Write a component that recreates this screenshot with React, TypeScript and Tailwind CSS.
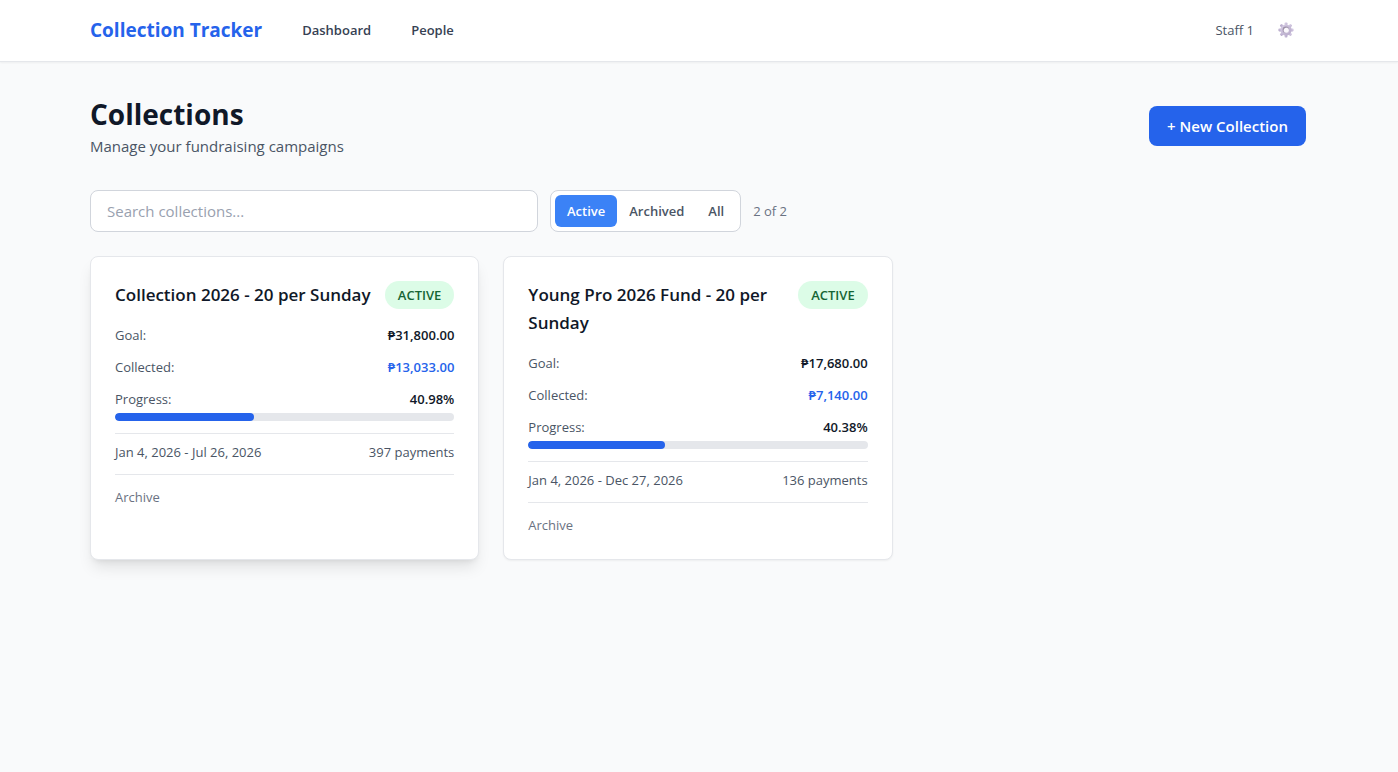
import { useState } from "react";

type Collection = {
  id: number;
  name: string;
  goal: string;
  collected: string;
  progress: number;
  start: string;
  end: string;
  payments: number;
  archived: boolean;
  raised?: boolean;
};

const collections: Collection[] = [
  {
    id: 1,
    name: "Collection 2026 - 20 per Sunday",
    goal: "₱31,800.00",
    collected: "₱13,033.00",
    progress: 40.98,
    start: "Jan 4, 2026",
    end: "Jul 26, 2026",
    payments: 397,
    archived: false,
    raised: true,
  },
  {
    id: 2,
    name: "Young Pro 2026 Fund - 20 per Sunday",
    goal: "₱17,680.00",
    collected: "₱7,140.00",
    progress: 40.38,
    start: "Jan 4, 2026",
    end: "Dec 27, 2026",
    payments: 136,
    archived: false,
  },
];

const filters = ["Active", "Archived", "All"] as const;

function GearIcon() {
  return (
    <svg viewBox="0 0 16 16" className="h-4 w-4" aria-hidden="true">
      <defs>
        <linearGradient id="gear" x1="0" y1="0" x2="1" y2="1">
          <stop offset="0" stopColor="#d9cfe6" />
          <stop offset="1" stopColor="#b5a8c9" />
        </linearGradient>
        <linearGradient id="gear-hole" x1="0" y1="0" x2="1" y2="1">
          <stop offset="0" stopColor="#8d8198" />
          <stop offset="1" stopColor="#cfc4dd" />
        </linearGradient>
      </defs>
      <g fill="url(#gear)">
        {[0, 45, 90, 135].map((a) => (
          <rect key={a} x="6.6" y="0.4" width="2.8" height="15.2" rx="0.8" transform={`rotate(${a} 8 8)`} />
        ))}
        <circle cx="8" cy="8" r="5.6" />
      </g>
      <circle cx="8" cy="8" r="3.4" fill="url(#gear-hole)" />
      <circle cx="8.3" cy="8.3" r="2.5" fill="#faf8fc" />
    </svg>
  );
}

function Row({ label, value, tone }: { label: string; value: string; tone: string }) {
  return (
    <div className="flex items-center justify-between">
      <span className="text-gray-600">{label}</span>
      <span className={`font-semibold ${tone}`}>{value}</span>
    </div>
  );
}

function CollectionCard({ c }: { c: Collection }) {
  return (
    <article className={`rounded-lg border border-gray-200 bg-white p-6 text-[13px]/5 ${c.raised ? "shadow-lg" : "shadow-xs"}`}>
      <div className="mb-4 flex items-start justify-between gap-2">
        <h2 className="text-[17px]/7 font-semibold text-gray-900">{c.name}</h2>
        <span className="shrink-0 rounded-full bg-[#dcfce7] px-[13px] py-1 font-semibold text-[#166534]">ACTIVE</span>
      </div>
      <div className="space-y-3">
        <Row label="Goal:" value={c.goal} tone="text-gray-900" />
        <Row label="Collected:" value={c.collected} tone="text-[#2563eb]" />
        <div>
          <Row label="Progress:" value={`${c.progress}%`} tone="text-gray-900" />
          <div className="mt-1 h-2 overflow-hidden rounded-full bg-gray-200">
            <div className="h-full rounded-full bg-[#2563eb]" style={{ width: `${c.progress}%` }} />
          </div>
        </div>
        <div className="flex justify-between border-t border-gray-200 pt-2 text-gray-600">
          <span>{c.start} - {c.end}</span>
          <span>{c.payments} payments</span>
        </div>
        <div className="flex border-t border-gray-200 pt-3">
          <button type="button" className="text-gray-500 hover:text-gray-700">Archive</button>
        </div>
      </div>
    </article>
  );
}

export default function App() {
  const [filter, setFilter] = useState<(typeof filters)[number]>("Active");
  const [search, setSearch] = useState("");

  const shown = collections.filter(
    (c) =>
      (filter === "All" || c.archived === (filter === "Archived")) &&
      c.name.toLowerCase().includes(search.toLowerCase())
  );

  return (
    <div className="min-h-screen bg-[#f9fafb] font-['Open_Sans','Noto_Sans',sans-serif] text-gray-900">
      <header className="border-b border-gray-200 bg-white pr-0.5 shadow-xs">
        <nav className="mx-auto flex max-w-7xl items-center justify-between px-8 pt-4 pb-[17px]">
          <div className="flex items-center gap-10">
            <a href="#" className="text-[19px]/7 font-bold text-[#2563eb]">Collection Tracker</a>
            <div className="flex gap-10 text-[13px]/7 font-semibold text-gray-700">
              <a href="#">Dashboard</a>
              <a href="#">People</a>
            </div>
          </div>
          <div className="flex items-center gap-3">
            <span className="text-[13px]/5 text-gray-600">Staff 1</span>
            <button type="button" aria-label="Settings" className="px-3">
              <GearIcon />
            </button>
          </div>
        </nav>
      </header>

      <main className="pr-0.5">
        <div className="mx-auto max-w-7xl px-8 py-8">
          <div className="mb-8 flex items-center justify-between">
            <div>
              <h1 className="text-[28px]/10 font-bold">Collections</h1>
              <p className="text-[15px]/6 text-gray-600">Manage your fundraising campaigns</p>
            </div>
            <button type="button" className="rounded-lg bg-[#2563eb] px-[18px] py-2 text-[15px]/6 font-semibold text-white hover:bg-[#1d4ed8]">
              + New Collection
            </button>
          </div>

          <div className="mb-6 flex items-center gap-3">
            <input
              type="text"
              aria-label="Search collections"
              placeholder="Search collections..."
              value={search}
              onChange={(e) => setSearch(e.target.value)}
              className="w-full max-w-md rounded-lg border border-gray-300 bg-white px-4 py-2 text-[15px]/6 placeholder:text-gray-400"
            />
            <div className="flex rounded-lg border border-gray-300 bg-white p-1">
              {filters.map((f) => (
                <button
                  key={f}
                  type="button"
                  onClick={() => setFilter(f)}
                  className={`rounded-md px-3 py-1.5 text-[13px]/5 font-semibold ${f === filter ? "bg-[#3b82f6] text-white" : "text-gray-600"}`}
                >
                  {f}
                </button>
              ))}
            </div>
            <span className="text-[13px]/5 text-gray-500">{shown.length} of {collections.length}</span>
          </div>

          <div className="grid gap-6 md:grid-cols-2 lg:grid-cols-3">
            {shown.map((c) => (
              <CollectionCard key={c.id} c={c} />
            ))}
          </div>
        </div>
      </main>
    </div>
  );
}
